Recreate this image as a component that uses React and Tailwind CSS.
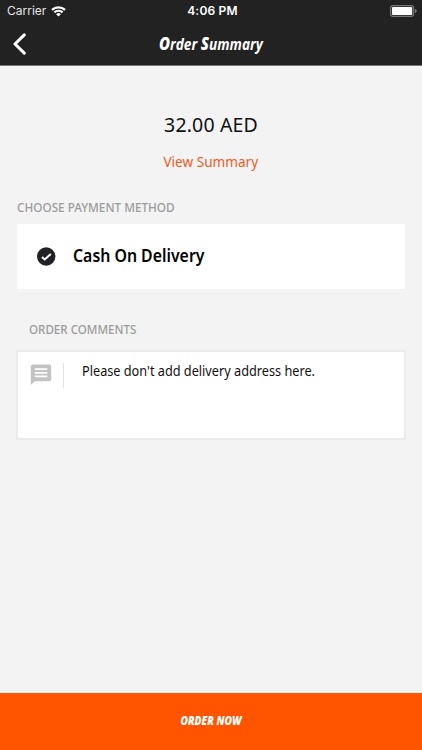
function StatusBar() {
  return (
    <div className="flex h-[22px] items-center justify-between pr-[6px] pl-[7px] text-white font-['Inter','Liberation_Sans',sans-serif]">
      <div className="flex w-[120px] items-center gap-[5px]">
        <span className="text-[12px] leading-none text-[#e6e6e6]">Carrier</span>
        <svg width="15" height="11" viewBox="0 0 15 11" fill="none" stroke="#fff" strokeWidth="2.200">
          <path d="M1 3.9a9.4 9.4 0 0 1 13 0" />
          <path d="M3.4 6.4a5.9 5.9 0 0 1 8.2 0" />
          <path d="M7.5 10.6 5.1 8.2a3.4 3.4 0 0 1 4.8 0z" fill="#fff" stroke="none" />
        </svg>
      </div>
      <span className="ml-[2px] text-[12px] font-semibold leading-none tracking-[0.2px] whitespace-nowrap">4:06 PM</span>
      <div className="flex w-[120px] justify-end">
        <svg width="27" height="12" viewBox="0 0 27 12" className="-mr-[1px] shrink-0">
          <rect x="0.6" y="0.6" width="23" height="10.8" rx="2.4" fill="none" stroke="#777" strokeWidth="1.2" />
          <rect x="2" y="2" width="20.2" height="8" rx="1" fill="#fff" />
          <path d="M25 4v4c1-.4 1.6-1.1 1.6-2S26 4.400 25 4z" fill="#808080" />
        </svg>
      </div>
    </div>
  );
}

function Header() {
  return (
    <header className="h-[66px] border-b border-[#777] bg-[#222]">
      <StatusBar />
      <div className="flex h-[43px] items-center justify-between px-[12px]">
        <svg width="15" height="22" viewBox="0 0 15 22" fill="none" stroke="#fff" strokeWidth="3" strokeLinecap="round" strokeLinejoin="round">
          <path d="M12.300 1.900 3 11l9.300 9.100" />
        </svg>
        <h1 className="w-[104px] text-[15.5px] font-bold italic leading-[18px] whitespace-nowrap text-white font-['Open_Sans',sans-serif]">
          <span className="inline-block origin-left scale-x-[0.88]">
            <span className="text-[17px] font-extrabold">O</span>rder <span className="text-[17px] font-extrabold">S</span>ummary
          </span>
        </h1>
        <span className="w-[15px]" />
      </div>
    </header>
  );
}

export default function App() {
  return (
    <div className="flex h-[750px] w-[422px] flex-col overflow-hidden bg-[#f3f3f3] text-[#111] font-['Noto_Sans',sans-serif]">
      <Header />
      <main className="flex flex-1 flex-col px-[17px]">
        <div className="flex flex-col items-center pt-[45px]">
          <span className="text-[19.5px] leading-[28px] tracking-[0.15px] whitespace-nowrap">32.00 AED</span>
          <span className="mt-[10px] scale-x-[0.97] text-[14px] leading-[26px] whitespace-nowrap text-[#ee5b1e]">View Summary</span>
        </div>
        <h2 className="mt-[23px] text-[12px] font-medium leading-[20px] whitespace-nowrap text-[#9b9b9b]">
          <span className="inline-block origin-left scale-x-[0.978]">CHOOSE PAYMENT METHOD</span>
        </h2>
        <section className="mt-[6px] flex h-[66px] items-center border-b border-[#f3f3f3] bg-white pl-[20px]">
          <svg width="19" height="19" viewBox="0 0 19 19">
            <circle cx="9.200" cy="9.500" r="9.200" fill="#222226" />
            <path d="m5 9.900 2.700 2.500 6.100-5.400" fill="none" stroke="#fff" strokeWidth="2" />
          </svg>
          <span className="-mt-[2px] ml-[17px] text-[17px] font-semibold leading-[24px] whitespace-nowrap text-black">
            <span className="inline-block origin-left scale-x-[0.932]">Cash On Delivery</span>
          </span>
        </section>
        <h2 className="mt-[30px] pl-[12px] text-[12px] font-medium leading-[20px] whitespace-nowrap text-[#9b9b9b]">
          <span className="inline-block origin-left scale-x-[0.965]">ORDER COMMENTS</span>
        </h2>
        <section className="mt-[10px] -mr-px -ml-px flex h-[90px] border-2 border-[#ebebeb] bg-white pt-[11px] pl-[12px]">
          <svg width="22" height="22" viewBox="0 0 22 22" className="mt-[1px]">
            <path d="M2.500 0.500h16.700a2 2 0 0 1 2 2v12.700a2 2 0 0 1-2 2H4.800L0.800 21V2.500a2 2 0 0 1 1.700-2z" fill="#c3c3c3" />
            <path d="M4.800 5.200h12.500M4.800 8.800h12.500M4.800 12.400h12.500" stroke="#fff" strokeWidth="1.700" />
          </svg>
          <span className="ml-[11px] h-[25px] w-px bg-[#e2e2e2]" />
          <span className="ml-[18px] -mt-[2px] text-[13.5px] leading-[20px] whitespace-nowrap">
            <span className="inline-block origin-left scale-x-[0.941]">Please don't add delivery address here.</span>
          </span>
        </section>
      </main>
      <button className="flex h-[57px] items-center justify-center bg-[#ff5500] pb-[3px] text-[13px] font-extrabold italic leading-none whitespace-nowrap text-white font-['Open_Sans',sans-serif]">
        <span className="inline-block scale-x-[0.785]">ORDER NOW</span>
      </button>
    </div>
  );
}
